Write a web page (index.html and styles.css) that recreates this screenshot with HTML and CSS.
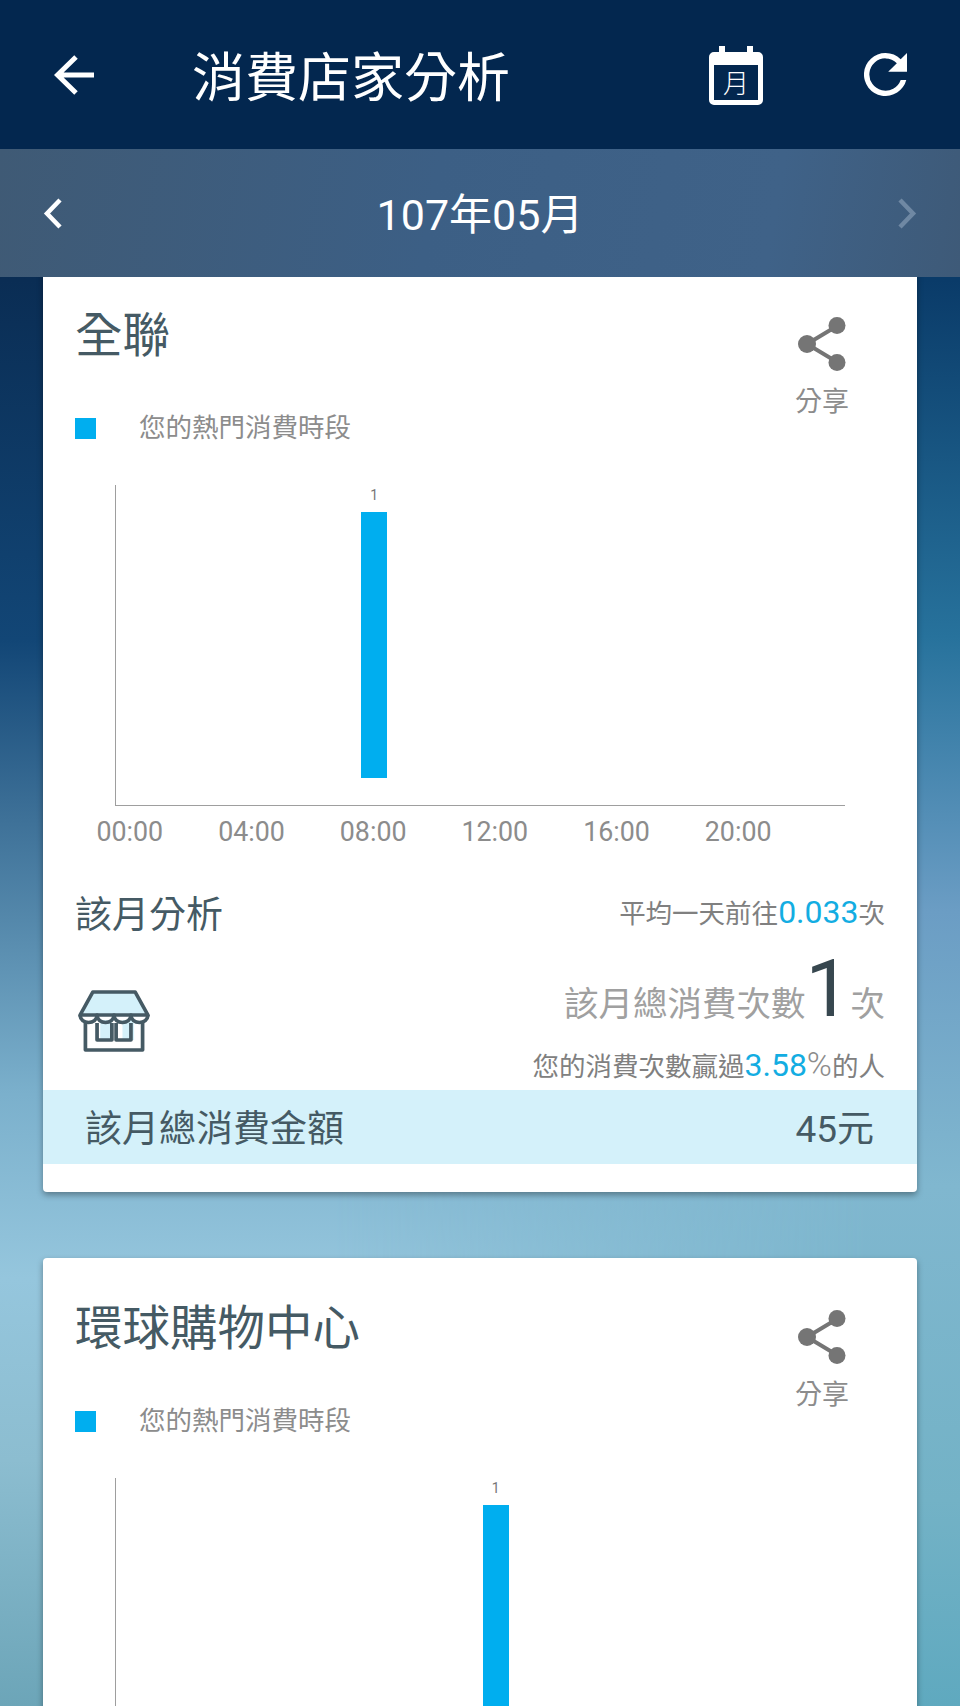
FILE: index.html
```html
<!DOCTYPE html>
<html lang="zh-Hant">
<head>
<meta charset="utf-8">
<title>消費店家分析</title>
<link rel="stylesheet" href="styles.css">
</head>
<body>
<div class="app">
  <header class="topbar">
    <svg class="ic-back" viewBox="0 0 42 42"><path d="M40 21H4M22 3 3.500 21 22 39" fill="none" stroke="#fff" stroke-width="5"/></svg>
    <h1 class="topbar-title">消費店家分析</h1>
    <svg class="ic-cal" viewBox="0 0 54 59"><path d="M10 0h6v6h22V0h6v6h5a5 5 0 0 1 5 5v43a5 5 0 0 1-5 5H5a5 5 0 0 1-5-5V11a5 5 0 0 1 5-5h5z" fill="#fff"/><rect x="5" y="19" width="44" height="35" fill="#03274f"/><text x="27" y="47" text-anchor="middle" class="cal-text">月</text></svg>
    <svg class="ic-refresh" viewBox="4 4 16 16"><path d="M17.650 6.350A7.950 7.950 0 0 0 12 4a8 8 0 1 0 7.730 10h-2.080A6 6 0 1 1 12 6c1.660 0 3.140.690 4.220 1.780L13 11h7V4l-2.350 2.350z" fill="#fff"/></svg>
  </header>
  <nav class="monthbar">
    <svg class="ic-chev" viewBox="0 0 20 31"><path d="M17 2 4 15.500 17 29" fill="none" stroke="#fff" stroke-width="4.500"/></svg>
    <div class="month">107年05月</div>
    <svg class="ic-chev is-off" viewBox="0 0 20 31"><path d="M3 2l13 13.500L3 29" fill="none" stroke="#6f88a3" stroke-width="4.500"/></svg>
  </nav>
  <main class="list">
    <article class="card">
      <div class="card-head">
        <div class="card-main">
          <h2 class="card-title">全聯</h2>
          <div class="legend"><span class="legend-box"></span><span>您的熱門消費時段</span></div>
        </div>
        <div class="share">
          <svg class="ic-share" viewBox="0 0 48 54"><path d="M39 9 9 27l30 18" fill="none" stroke="#757575" stroke-width="4"/><circle cx="39" cy="8.500" r="8.500" fill="#757575"/><circle cx="9" cy="27" r="9" fill="#757575"/><circle cx="39" cy="45.500" r="8.500" fill="#757575"/></svg>
          <span>分享</span>
        </div>
      </div>
      <div class="chart">
        <div class="plot">
          <div class="bar-col" style="grid-column: 9"><span class="bar-label">1</span><span class="bar"></span></div>
        </div>
        <div class="axis">
          <span>00:00</span><span>04:00</span><span>08:00</span><span>12:00</span><span>16:00</span><span>20:00</span>
        </div>
      </div>
      <div class="stats-head">
        <h3 class="stats-title">該月分析</h3>
        <p class="stat-line stat-line-up">平均一天前往<b class="num">0.033</b>次</p>
      </div>
      <div class="stats-body">
        <svg class="ic-store" viewBox="1 0 68 62" preserveAspectRatio="none"><path d="M15 2h40l12 23H3z" fill="#d4f1fa"/><path d="M22 30h11v20H22zM43 30h11v20H43z" fill="#d4f1fa"/><g fill="none" stroke="#455a64" stroke-width="3.500" stroke-linejoin="round"><path d="M15 2h40l12 23H3z"/><path d="M3 25c0 10 16 10 16 0 0 10 16 10 16 0 0 10 16 10 16 0 0 10 16 10 16 0"/><path d="M8 31v29h54V31"/><path d="M19 33v17h14V33M37 33v17h14V33"/></g></svg>
        <div class="stats-right">
          <p class="stat-total">該月總消費次數<b class="big">1</b>次</p>
          <p class="stat-line">您的消費次數贏過<b class="num">3.58</b><span class="pct">%</span>的人</p>
        </div>
      </div>
      <div class="band"><span>該月總消費金額</span><span class="band-val"><span class="latin">45</span>元</span></div>
    </article>
    <article class="card">
      <div class="card-head">
        <div class="card-main">
          <h2 class="card-title">環球購物中心</h2>
          <div class="legend"><span class="legend-box"></span><span>您的熱門消費時段</span></div>
        </div>
        <div class="share">
          <svg class="ic-share" viewBox="0 0 48 54"><path d="M39 9 9 27l30 18" fill="none" stroke="#757575" stroke-width="4"/><circle cx="39" cy="8.500" r="8.500" fill="#757575"/><circle cx="9" cy="27" r="9" fill="#757575"/><circle cx="39" cy="45.500" r="8.500" fill="#757575"/></svg>
          <span>分享</span>
        </div>
      </div>
      <div class="chart">
        <div class="plot">
          <div class="bar-col" style="grid-column: 13"><span class="bar-label">1</span><span class="bar"></span></div>
        </div>
      </div>
    </article>
  </main>
</div>
</body>
</html>
```
FILE: styles.css
```css
* { box-sizing: border-box; }
html, body { margin: 0; padding: 0; }
body { font-family: Roboto, "Noto Sans CJK TC", sans-serif; }
h1, h2, h3, p { margin: 0; font-weight: 400; }
b { font-weight: 400; }

.app {
  width: 960px;
  height: 1706px;
  overflow: hidden;
  display: flex;
  flex-direction: column;
  position: relative;
  background: linear-gradient(180deg, #04244a 0, #0a2d54 280px, #124676 640px, #3e7198 820px, #7bb0cc 1094px, #95c6dd 1278px, #8cbdd0 1460px, #6ca5b8 1706px);
}
.app::before {
  content: "";
  position: absolute;
  inset: 0;
  background: linear-gradient(180deg, #0a3b69 280px, #27729c 637px, #6b9dc4 911px, #80b7cf 1186px, #73b2c6 1500px, #5fa9bf 1706px);
  -webkit-mask-image: linear-gradient(90deg, transparent 35%, #000 90%);
  mask-image: linear-gradient(90deg, transparent 35%, #000 90%);
}

.topbar {
  height: 149px;
  flex: none;
  display: flex;
  align-items: center;
  background: #03274f;
  padding-left: 54px;
  position: relative;
  z-index: 2;
}
.ic-back { width: 42px; height: 42px; margin-top: 1px; flex: none; }
.topbar-title { font-size: 53px; line-height: 60px; color: #fff; margin-left: 96px; width: 517px; font-weight: 400; padding-top: 8px; white-space: nowrap; }
.ic-cal { width: 54px; height: 59px; margin-top: 1px; flex: none; }
.cal-text { font-family: "Noto Sans CJK TC", sans-serif; font-size: 26px; font-weight: 300; fill: #fff; }
.ic-refresh { width: 43px; height: 43px; margin-left: 101px; flex: none; }

.monthbar {
  height: 128px;
  flex: none;
  display: flex;
  align-items: center;
  justify-content: space-between;
  padding: 0 43px;
  background: linear-gradient(100deg, #3f5a75 0, #3c5f85 45%, #3f6288 80%, #3e5a78 100%);
  position: relative;
  z-index: 2;
}
.ic-chev { width: 20px; height: 31px; flex: none; }
.month { font-size: 43px; line-height: 50px; color: #fff; font-weight: 400; padding-top: 4px; }

.list {
  margin-top: -12px;
  padding: 0 43px;
  display: flex;
  flex-direction: column;
  gap: 66px;
  flex: none;
  position: relative;
  z-index: 1;
}
.card {
  height: 927px;
  background: #fff;
  border-radius: 4px;
  box-shadow: 0 3px 6px rgba(0, 0, 0, .35);
  flex: none;
}

.card-head {
  display: flex;
  justify-content: space-between;
  height: 220px;
  padding-top: 43px;
}
.card-main { padding-left: 32px; }
.card-title { font-size: 47.500px; line-height: 56px; color: #455a64; font-weight: 400; white-space: nowrap; }
.legend {
  display: flex;
  align-items: center;
  margin-top: 44px;
  font-size: 26.500px;
  line-height: 40px;
  color: #8c8c8c;
  font-weight: 400;
}
.legend-box { width: 21px; height: 21px; background: #00aeef; margin-right: 43px; }
.share {
  display: flex;
  flex-direction: column;
  align-items: center;
  width: 56px;
  margin-right: 67px;
  margin-top: 9px;
  font-size: 27px;
  line-height: 36px;
  color: #8c8c8c;
  font-weight: 400;
}
.ic-share { width: 48px; height: 54px; margin-bottom: 13px; flex: none; }

.chart { padding-left: 72px; }
.plot {
  width: 730px;
  height: 321px;
  display: grid;
  grid-template-columns: repeat(24, 1fr);
  border-left: 1px solid #9e9e9e;
  border-bottom: 1px solid #9e9e9e;
}
.bar-col {
  display: flex;
  flex-direction: column;
  align-items: center;
}
.bar-label { font-size: 14px; line-height: 20px; height: 27px; color: #777; }
.bar { width: 26px; height: 266px; background: #00aeef; }
.axis {
  width: 730px;
  display: grid;
  grid-template-columns: repeat(6, 1fr);
  margin-left: -46px;
  height: 52px;
  font-size: 26.800px;
  line-height: 52px;
  color: #8c8c8c;
  font-weight: 400;
  text-align: center;
}

.stats-head {
  display: flex;
  justify-content: space-between;
  align-items: center;
  padding: 32px 32px 0 32px;
}
.stats-title { font-size: 37px; line-height: 52px; color: #455a64; }
.stat-line { font-size: 26.500px; line-height: 40px; color: #808080; font-weight: 400; white-space: nowrap; }
.stat-line-up { margin-bottom: 7px; }
.num { font-size: 32px; color: #13ade2; }
.pct { font-size: 34px; color: #8c8c8c; font-weight: 300; }

.stats-body {
  display: flex;
  justify-content: space-between;
  padding: 0 32px 0 35px;
  height: 148px;
}
.ic-store { width: 72px; height: 62px; margin-top: 48px; flex: none; }
.stats-right { display: flex; flex-direction: column; align-items: flex-end; }
.stat-total { font-size: 34.500px; line-height: 79px; color: #a0a0a0; font-weight: 400; white-space: nowrap; display: flex; align-items: baseline; margin-top: 8px; }
.big { font-size: 80px; color: #37474f; margin: 0; font-weight: 400; line-height: 79px; }

.band {
  height: 74px;
  background: #d4f1fa;
  display: flex;
  justify-content: space-between;
  align-items: center;
  padding: 0 43px 3px 42px;
  font-size: 37px;
  color: #455a64;
  font-weight: 400;
}
.band-val { white-space: nowrap; }
```
